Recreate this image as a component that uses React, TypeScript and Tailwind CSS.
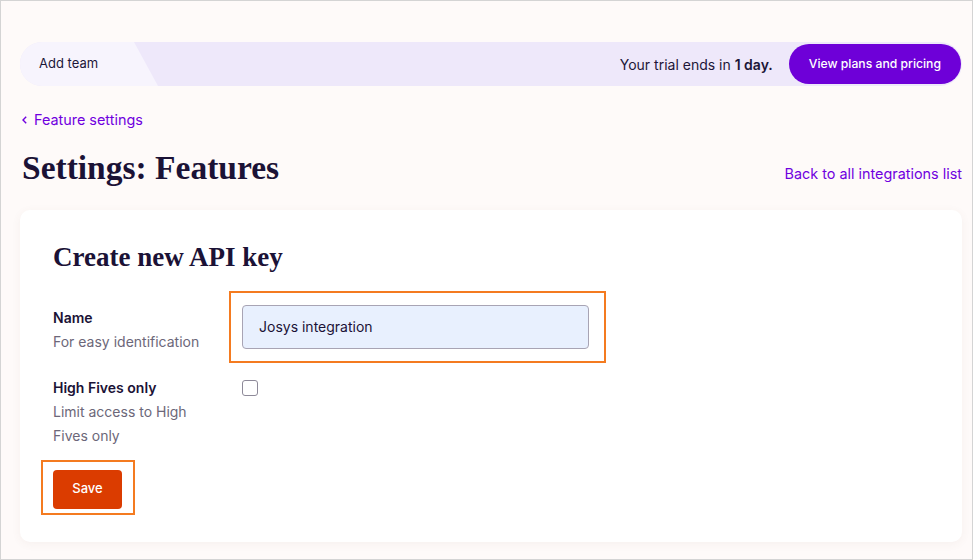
const sans = "font-['Inter',sans-serif]"
const serif = "font-['Liberation_Serif',serif]"

export default function App() {
  return (
    <div className={`min-h-[560px] w-[973px] border border-[#d4d4d4] bg-[#fefaf9] pl-[19px] pr-[10px] pt-[41px] ${sans}`}>
      {/* trial bar */}
      <div className="flex h-[44px] items-center overflow-hidden rounded-full bg-[#eee8fa] pr-[1px]">
        <div className="flex h-full w-[138px] items-center bg-[#f7f4fd] pl-[19px] text-[13px] text-[#1d1638] [clip-path:polygon(0_0,114px_0,138px_100%,0_100%)]">
          Add team
        </div>
        <div className="flex-1" />
        <span className="text-[14px] text-[#1d1638]">
          Your trial ends in <b className="font-semibold">1 day.</b>
        </span>
        <button className="ml-[16px] h-[40px] rounded-full bg-[#6e00d8] px-[20px] text-[12.2px] font-medium text-white">
          View plans and pricing
        </button>
      </div>

      <a className="mt-[23px] flex items-center gap-[7px] pl-[2px] text-[14.4px] text-[#7000df]">
        <svg width="5" height="8" viewBox="0 0 5 8" fill="none" stroke="currentColor" strokeWidth="1.4">
          <path d="M4.2 0.7 L1 4 L4.2 7.3" />
        </svg>
        Feature settings
      </a>

      <div className="mt-[16px] flex items-end justify-between">
        <h1 className={`${serif} pl-[2px] text-[33.5px] font-bold leading-[42px] text-[#1b1236]`}>Settings: Features</h1>
        <a className="mb-[4px] text-[14.4px] text-[#7000df]">Back to all integrations list</a>
      </div>

      {/* card */}
      <div className="mt-[21px] h-[332px] rounded-[10px] bg-white px-[33px] pt-[29px] shadow-[0_2px_10px_rgba(120,80,60,0.06)]">
        <h2 className={`${serif} text-[27px] font-bold leading-[36px] text-[#1b1236]`}>Create new API key</h2>

        <div className="mt-[30px] flex">
          <div className="w-[189px] pt-[1px] text-[14px] leading-[24px]">
            <div className="font-semibold text-[#1b1236]">Name</div>
            <div className="text-[#6c6779]">For easy identification</div>
          </div>
          <div className="-ml-[13px] -mt-[14px] border-2 border-[#f47b20] pb-[12px] pl-[11px] pr-[15px] pt-[12px]">
            <input
              readOnly
              value="Josys integration"
              className="block h-[44px] w-[347px] rounded-[4px] border border-[#a8a4b4] bg-[#e8f0fe] px-[16px] text-[14px] text-[#1b1236] outline-none"
            />
          </div>
        </div>

        <div className="mt-[13px] flex">
          <div className="w-[189px] text-[14px] leading-[24px]">
            <div className="font-semibold text-[#1b1236]">High Fives only</div>
            <div className="w-[150px] text-[#6c6779]">Limit access to High Fives only</div>
          </div>
          <div className="pt-[4px]">
            <div className="h-[16px] w-[16px] rounded-[3px] border border-[#8e8a99] bg-white" />
          </div>
        </div>

        <div className="-ml-[12px] mt-[12px] inline-block border-2 border-[#f47b20] pb-[4px] pl-[10px] pr-[11px] pt-[8px]">
          <button className="block h-[39px] w-[69px] rounded-[4px] bg-[#db3c00] text-[13px] font-medium text-white">
            Save
          </button>
        </div>
      </div>
    </div>
  )
}
